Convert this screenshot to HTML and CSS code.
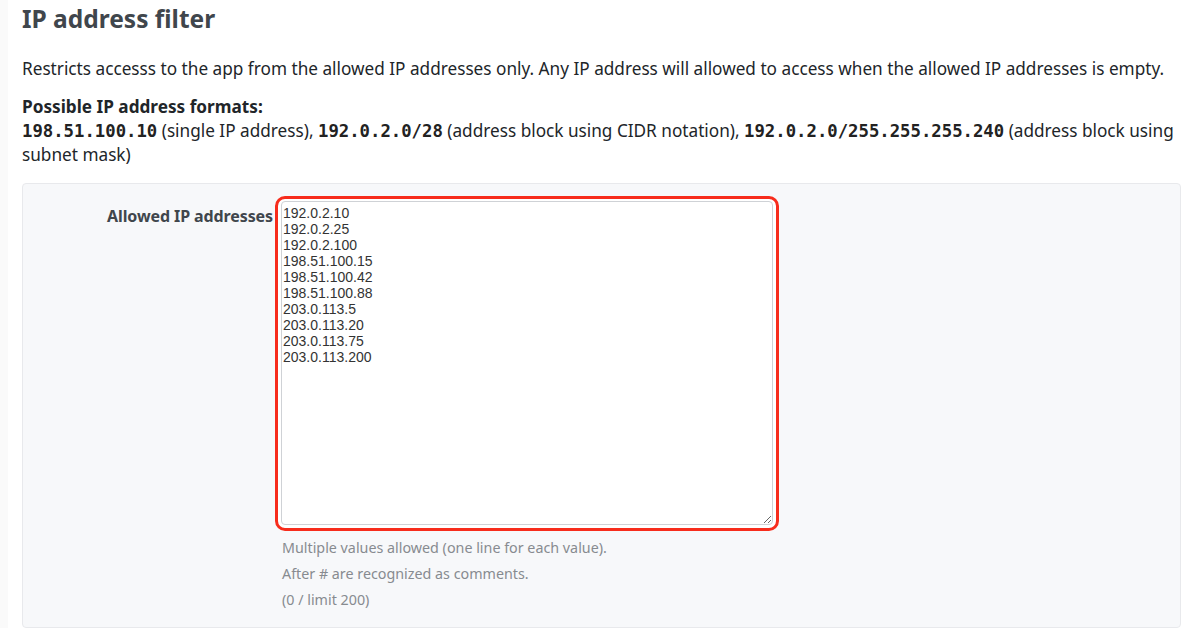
FILE: index.html
```html
<!DOCTYPE html>
<html lang="en">
<head>
  <meta charset="UTF-8" />
  <title>IP address filter</title>
  <link rel="stylesheet" href="styles.css">
</head>
<body>

<div class="page">
  <h1>IP address filter</h1>
  <p class="lead">Restricts accesss to the app from the allowed IP addresses only. Any IP address will allowed to access when the allowed IP addresses is empty.</p>

  <div class="formats">
    <strong>Possible IP address formats:</strong><br>
    <code>198.51.100.10</code> (single IP address), <code>192.0.2.0/28</code> (address block using CIDR notation), <code>192.0.2.0/255.255.255.240</code> (address block using subnet mask)
  </div>

  <div class="panel">
    <label class="field-label" for="allowedIps">Allowed IP addresses</label>
    <div class="field">
      <div class="focus-ring">
        <textarea id="allowedIps" spellcheck="false">192.0.2.10
192.0.2.25
192.0.2.100
198.51.100.15
198.51.100.42
198.51.100.88
203.0.113.5
203.0.113.20
203.0.113.75
203.0.113.200</textarea>
      </div>
      <div class="help">
        <div>Multiple values allowed (one line for each value).</div>
        <div>After # are recognized as comments.</div>
        <div>(0 / limit 200)</div>
      </div>
    </div>
  </div>
</div>

</body>
</html>
```

FILE: styles.css
```css
body {
  margin: 0;
  font-family: 'Noto Sans', 'Open Sans', sans-serif;
  color: #212529;
  background: #fff;
  border-left: 8px solid #fafafa;
}
.page {
  padding: 2px 19px 0 14px;
}
h1 {
  margin: 0;
  font-size: 24.5px;
  font-weight: bold;
  color: #40464c;
  line-height: 33px;
}
.lead {
  margin: 22px 0 0;
  font-size: 17.2px;
  line-height: 24px;
}
.formats {
  margin-top: 14px;
  font-size: 17.2px;
  line-height: 24px;
}
.formats strong { font-weight: bold; }
code {
  font-family: 'DejaVu Sans Mono', monospace;
  font-weight: bold;
  font-size: 17.3px;
  line-height: 1;
  color: #222;
}
.panel {
  margin-top: 16px;
  background: #f7f8fa;
  border: 1px solid #e8e9ec;
  border-radius: 4px;
  padding: 12px 0 14px;
  display: grid;
  grid-template-columns: 252px 504px;
}
.field-label {
  text-align: right;
  padding-right: 2px;
  padding-top: 9px;
  font-size: 16px;
  font-weight: bold;
  line-height: 22px;
  color: #40464c;
  letter-spacing: -0.1px;
}
.focus-ring {
  border: 3px solid #f72c1c;
  border-radius: 10px;
  background: #fff;
  padding: 2px 3px 3px 3px;
  box-sizing: border-box;
  height: 335px;
  display: flex;
}
textarea {
  flex: 1;
  margin: 0;
  border: 1px solid #cfd2d6;
  border-radius: 4px;
  padding: 3px 1px;
  font-family: 'Liberation Sans', Arial, sans-serif;
  font-size: 14px;
  line-height: 16px;
  color: #333;
  background: #fff;
  outline: none;
}
.help {
  margin-top: 4px;
  padding-left: 7px;
  font-size: 14.3px;
  line-height: 26px;
  color: #878b90;
}
```
